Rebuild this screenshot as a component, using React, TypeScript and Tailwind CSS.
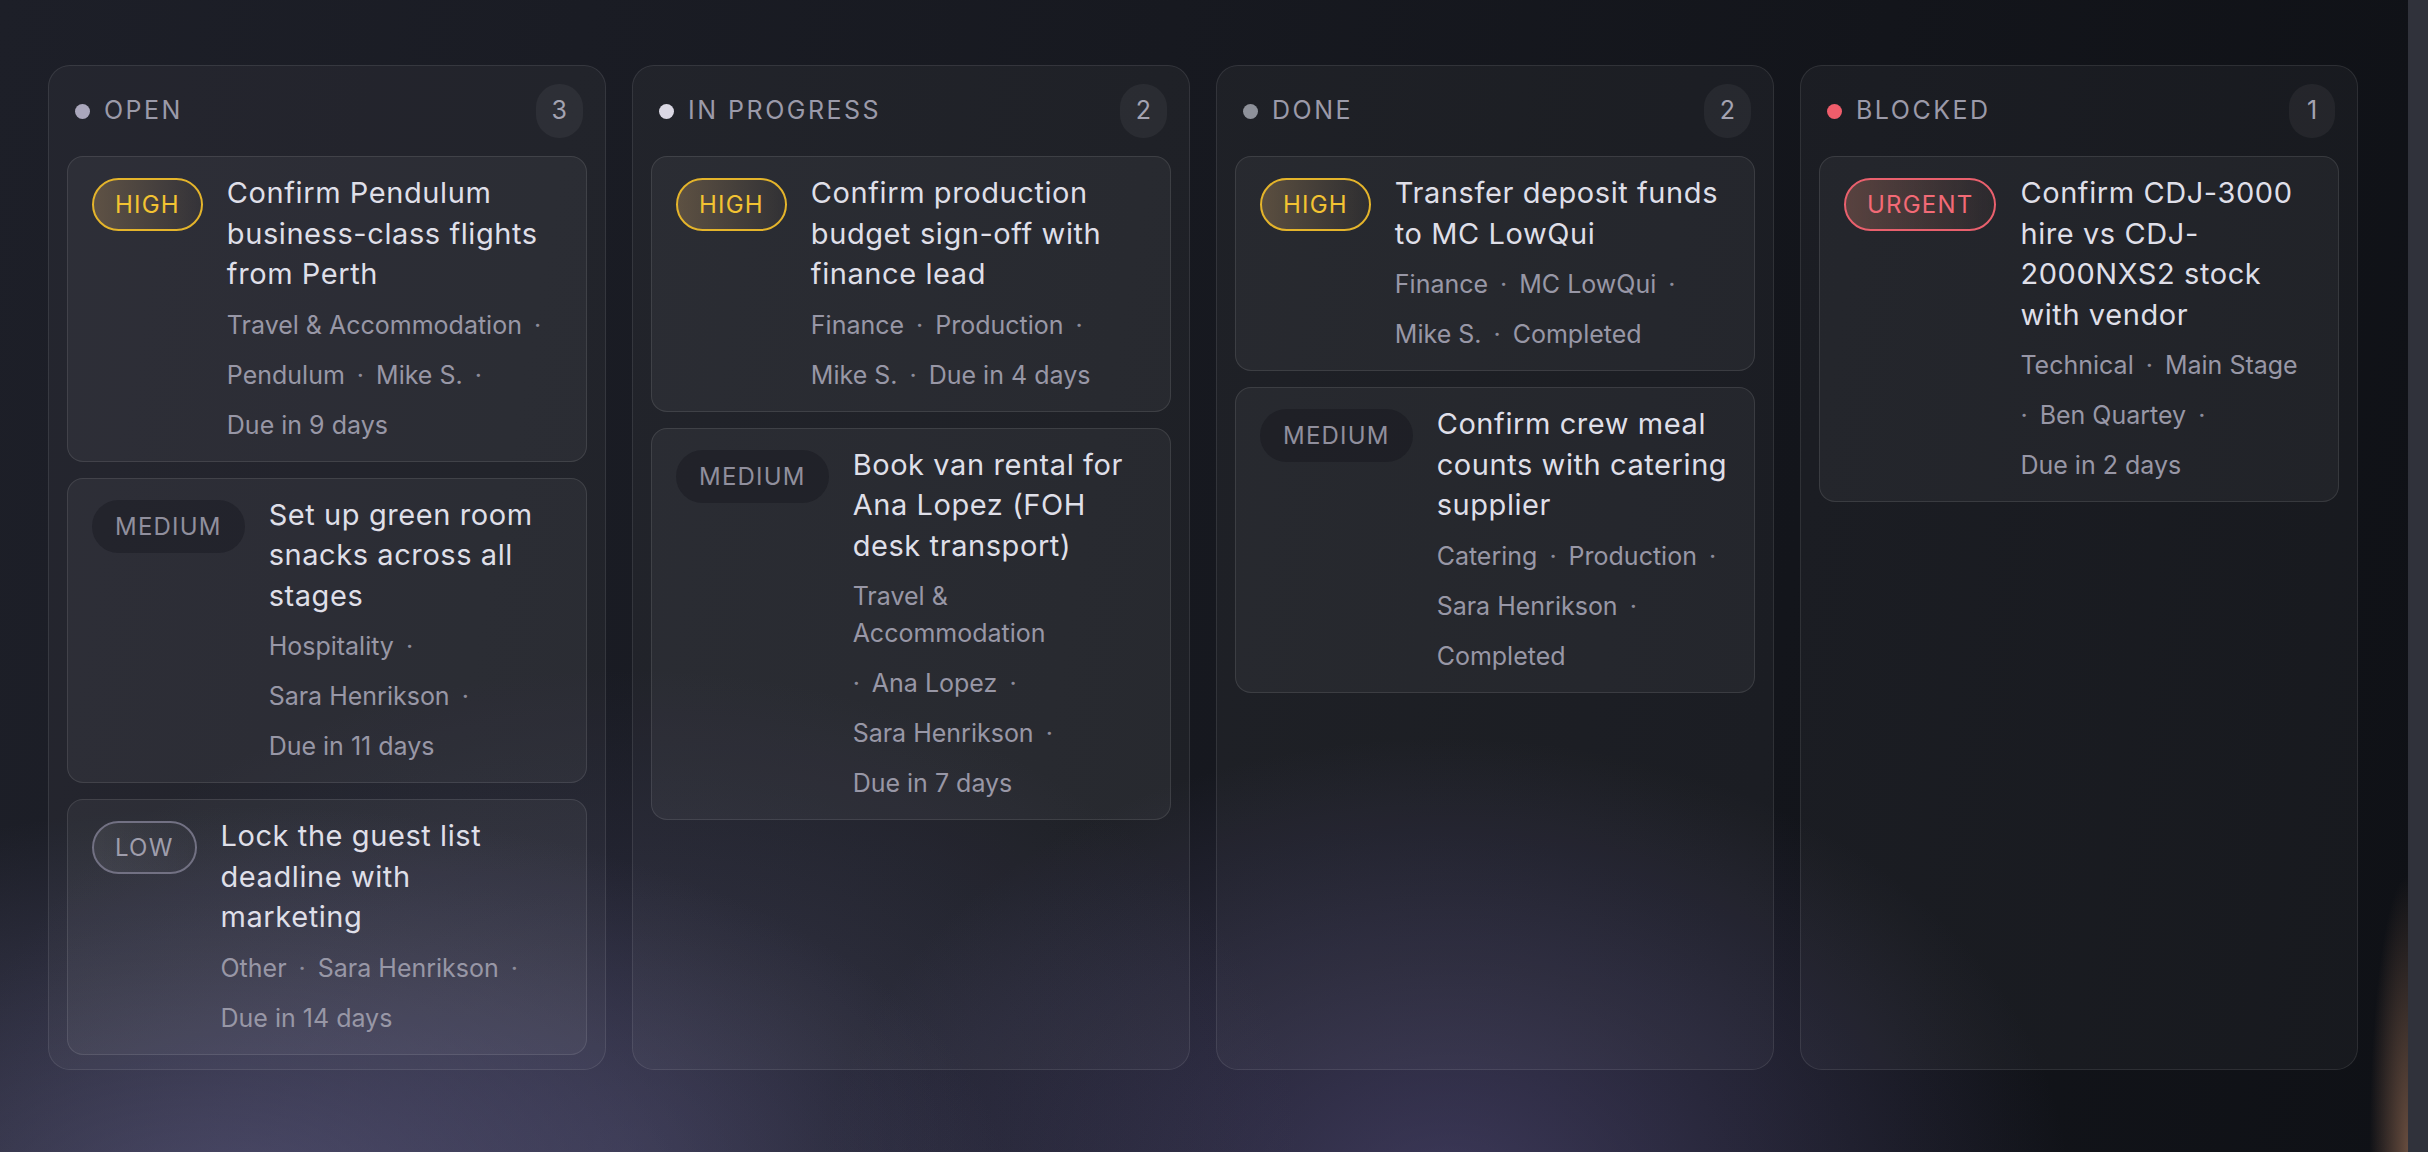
import React from 'react'

type Priority = 'URGENT' | 'HIGH' | 'MEDIUM' | 'LOW'

type Task = {
  id: string
  priority: Priority
  title: string
  meta: string[]
}

type Column = {
  key: string
  label: string
  dot: string
  tasks: Task[]
}

const columns: Column[] = [
  {
    key: 'open',
    label: 'OPEN',
    dot: 'bg-[#aaa7bc]',
    tasks: [
      {
        id: 't1',
        priority: 'HIGH',
        title: 'Confirm Pendulum business-class flights from Perth',
        meta: ['Travel & Accommodation', 'Pendulum', 'Mike S.', 'Due in 9 days'],
      },
      {
        id: 't2',
        priority: 'MEDIUM',
        title: 'Set up green room snacks across all stages',
        meta: ['Hospitality', 'Sara Henrikson', 'Due in 11 days'],
      },
      {
        id: 't3',
        priority: 'LOW',
        title: 'Lock the guest list deadline with marketing',
        meta: ['Other', 'Sara Henrikson', 'Due in 14 days'],
      },
    ],
  },
  {
    key: 'in-progress',
    label: 'IN PROGRESS',
    dot: 'bg-[#dad8e4]',
    tasks: [
      {
        id: 't4',
        priority: 'HIGH',
        title: 'Confirm production budget sign-off with finance lead',
        meta: ['Finance', 'Production', 'Mike S.', 'Due in 4 days'],
      },
      {
        id: 't5',
        priority: 'MEDIUM',
        title: 'Book van rental for Ana Lopez (FOH desk transport)',
        meta: ['Travel & Accommodation', 'Ana Lopez', 'Sara Henrikson', 'Due in 7 days'],
      },
    ],
  },
  {
    key: 'done',
    label: 'DONE',
    dot: 'bg-[#8e919a]',
    tasks: [
      {
        id: 't6',
        priority: 'HIGH',
        title: 'Transfer deposit funds to MC LowQui',
        meta: ['Finance', 'MC LowQui', 'Mike S.', 'Completed'],
      },
      {
        id: 't7',
        priority: 'MEDIUM',
        title: 'Confirm crew meal counts with catering supplier',
        meta: ['Catering', 'Production', 'Sara Henrikson', 'Completed'],
      },
    ],
  },
  {
    key: 'blocked',
    label: 'BLOCKED',
    dot: 'bg-[#ef5d6b]',
    tasks: [
      {
        id: 't8',
        priority: 'URGENT',
        title: 'Confirm CDJ-3000 hire vs CDJ-2000NXS2 stock with vendor',
        meta: ['Technical', 'Main Stage', 'Ben Quartey', 'Due in 2 days'],
      },
    ],
  },
]

const priorityStyles: Record<Priority, string> = {
  URGENT:
    'border-[#e9606d] text-[#f26a76] bg-[linear-gradient(90deg,rgba(190,120,100,0.34),rgba(190,120,100,0.05))]',
  HIGH:
    'border-[#e4b42b] text-[#f3c332] bg-[linear-gradient(90deg,rgba(190,150,95,0.34),rgba(190,150,95,0.05))]',
  MEDIUM: 'border-transparent text-[#908f9d] bg-[rgba(10,12,18,0.28)]',
  LOW: 'border-[#727183] text-[#9f9eac] bg-[linear-gradient(90deg,rgba(255,255,255,0.07),rgba(255,255,255,0.02))]',
}

function PriorityPill({ priority }: { priority: Priority }) {
  return (
    <span
      className={`mt-[5px] shrink-0 rounded-full border-2 px-[21px] py-[8px] text-[24px] leading-[33px] tracking-[0.05em] ${priorityStyles[priority]}`}
    >
      {priority}
    </span>
  )
}

function TaskCard({ task }: { task: Task }) {
  // meta items and their separators wrap independently
  const parts: { text: string; dot: boolean }[] = []
  task.meta.forEach((m, i) => {
    parts.push({ text: m, dot: false })
    if (i < task.meta.length - 1) parts.push({ text: '·', dot: true })
  })

  return (
    <div className="flex items-start gap-6 rounded-[16px] border border-white/10 bg-white/[0.045] pl-6 pr-[26px] pt-[16px] pb-[17px]">
      <PriorityPill priority={task.priority} />
      <div className="min-w-0 flex-1">
        <p className="text-[29px] leading-[40.5px] tracking-[0.02em] text-[#dfdfe8]">{task.title}</p>
        <div className="mt-3 flex flex-wrap items-start gap-x-3 gap-y-[13px] text-[25px] leading-[37px] text-[#9897a6]">
          {parts.map((p, i) => (
            <span key={i} className={p.dot ? 'text-[#8c8b99]' : ''}>
              {p.text}
            </span>
          ))}
        </div>
      </div>
    </div>
  )
}

function BoardColumn({ column }: { column: Column }) {
  return (
    <section className="flex min-h-0 flex-col rounded-[22px] border border-white/[0.09] bg-white/[0.035] p-[18px]">
      <div className="mb-[18px] flex items-center justify-between pl-[8px] pr-[4px]">
        <div className="flex items-center gap-[14px]">
          <span className={`h-[15px] w-[15px] rounded-full ${column.dot}`} />
          <h2 className="text-[25px] tracking-[0.1em] text-[#9b9aa9]">{column.label}</h2>
        </div>
        <span className="flex h-[54px] min-w-[46px] items-center justify-center rounded-full bg-white/[0.05] px-4 text-[25px] text-[#a4a3b1]">
          {column.tasks.length}
        </span>
      </div>
      <div className="flex flex-col gap-4">
        {column.tasks.map((t) => (
          <TaskCard key={t.id} task={t} />
        ))}
      </div>
    </section>
  )
}

export default function App() {
  return (
    <div className="flex h-screen w-full overflow-hidden font-['Inter','Noto_Sans',sans-serif]">
      <main className="min-w-0 flex-1 bg-[#14161d] bg-[radial-gradient(32%_34%_at_10%_104%,rgba(112,108,155,0.5),transparent),radial-gradient(28%_42%_at_26%_100%,rgba(90,86,130,0.35),transparent),radial-gradient(26%_40%_at_60%_104%,rgba(104,94,155,0.48),transparent),radial-gradient(1.6%_24%_at_100%_100%,rgba(175,125,95,0.55),transparent),linear-gradient(100deg,#1d1f28_0%,#171920_45%,#0f1116_100%)] pl-12 pr-[50px] pt-[65px] pb-[82px]">
        <div className="grid h-full grid-cols-4 gap-[26px]">
          {columns.map((c) => (
            <BoardColumn key={c.key} column={c} />
          ))}
        </div>
      </main>
      <div className="w-5 shrink-0 bg-[#30323b]" />
    </div>
  )
}
